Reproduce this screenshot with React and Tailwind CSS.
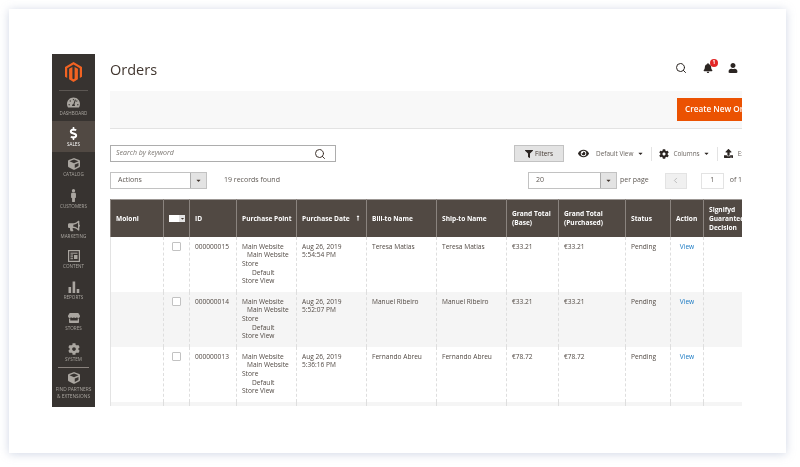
import React from 'react'
import { FaDollarSign, FaCube, FaMale, FaBullhorn, FaStore, FaCog, FaFilter, FaEye, FaUser, FaBell, FaTachometerAlt, FaCaretDown, FaUpload, FaLongArrowAltUp } from 'react-icons/fa'
import { LuSearch, LuChevronLeft } from 'react-icons/lu'

const ContentIcon = () => (
  <svg width="12" height="12" viewBox="0 0 12 12" fill="none" stroke="currentColor">
    <rect x="0.6" y="0.6" width="10.8" height="10.8" strokeWidth="1.2" />
    <path d="M2.5 3.2h7M2.5 5h2.5M2.5 6.8h2.5M2.5 8.7h2.5" strokeWidth="1" />
    <rect x="6" y="5" width="3.5" height="4" fill="currentColor" stroke="none" />
  </svg>
)

const ReportsIcon = () => (
  <svg width="12" height="12" viewBox="0 0 12 12" fill="currentColor">
    <rect x="0.5" y="6" width="2.6" height="6" />
    <rect x="4.6" y="0.5" width="2.6" height="11.5" />
    <rect x="8.7" y="8" width="2.6" height="4" />
  </svg>
)

const MagentoLogo = () => (
  <svg width="17" height="20" viewBox="0 0 17 20" fill="#f26322">
    <path d="M8.5 0 17 4.9v9.9l-2.2 1.3V6.2L8.5 2.6 2.2 6.2v9.9L0 14.8V4.9z" />
    <path d="M9.6 4.9 12.9 6.8v10.4L8.5 20 4.1 17.2V6.8l3.3-1.9v11.6l1.1.7 1.1-.7z" />
  </svg>
)

const NAV = [
  { label: 'DASHBOARD', icon: <FaTachometerAlt size={13} />, h: 'h-[30px]' },
  { label: 'SALES', icon: <FaDollarSign size={13} />, h: 'h-[31px]', active: true },
  { label: 'CATALOG', icon: <FaCube size={12} />, h: 'h-[31px]' },
  { label: 'CUSTOMERS', icon: <FaMale size={13} />, h: 'h-[31px]' },
  { label: 'MARKETING', icon: <FaBullhorn size={12} />, h: 'h-[30px]' },
  { label: 'CONTENT', icon: <ContentIcon />, h: 'h-[31px]' },
  { label: 'REPORTS', icon: <ReportsIcon />, h: 'h-[31px]' },
  { label: 'STORES', icon: <FaStore size={12} />, h: 'h-[31px]' },
  { label: 'SYSTEM', icon: <FaCog size={12} />, h: 'h-[30px]' },
]

const ROWS = [
  { id: '000000015', date: 'Aug 26, 2019', time: '5:54:54 PM', name: 'Teresa Matias', total: '€33.21', bg: 'bg-white' },
  { id: '000000014', date: 'Aug 26, 2019', time: '5:52:07 PM', name: 'Manuel Ribeiro', total: '€33.21', bg: 'bg-[#f5f5f5]' },
  { id: '000000013', date: 'Aug 26, 2019', time: '5:36:16 PM', name: 'Fernando Abreu', total: '€78.72', bg: 'bg-white' },
]

const th = 'border-x border-[#8a837e] px-[5px] text-left align-middle font-bold leading-[9px]'
const td = 'border-x border-dashed border-[#dedede] px-[5px] pt-[5px] align-top'

function Sidebar() {
  return (
    <aside className="flex h-full w-[43px] shrink-0 flex-col bg-[#373330] text-[#aaa6a0]">
      <div className="mx-[7px] flex h-[37px] shrink-0 items-start justify-center border-b border-[#5c5753] pt-[8px]">
        <MagentoLogo />
      </div>
      {NAV.map(item => (
        <div key={item.label} className={`flex shrink-0 flex-col items-center justify-center gap-[2px] ${item.h} ${item.active ? 'bg-[#514943] text-white' : ''}`}>
          {item.icon}
          <span className="text-[4.6px] leading-[5px]">{item.label}</span>
        </div>
      ))}
      <div className="mx-[6px] flex flex-col items-center border-t border-[#8a837e] pt-[4px] text-center">
        <FaCube size={12} />
        <span className="mt-[2px] whitespace-nowrap text-[4.8px] leading-[7px]">FIND PARTNERS<br />&amp; EXTENSIONS</span>
      </div>
    </aside>
  )
}

function Arrow() {
  return (
    <div className="flex h-full w-[16px] items-center justify-center border-l border-[#adadad] bg-[#e3e3e3] text-[#41362f]">
      <FaCaretDown size={7} />
    </div>
  )
}

function OrdersTable() {
  return (
    <table className="mt-[10px] w-[650px] table-fixed border-collapse border-l border-[#e3e3e3] text-[6.6px] leading-[8.7px] text-[#514943]">
      <colgroup>
        <col className="w-[53px]" /><col className="w-[26px]" /><col className="w-[47px]" /><col className="w-[60px]" /><col className="w-[70px]" />
        <col className="w-[70px]" /><col className="w-[70px]" /><col className="w-[52px]" /><col className="w-[67px]" /><col className="w-[45px]" />
        <col className="w-[33px]" /><col className="w-[57px]" />
      </colgroup>
      <thead>
        <tr className="h-[37px] border-t border-[#9c9794] bg-[#514943] text-white">
          <th className={th}>Moloni</th>
          <th className={th}>
            <div className="flex h-[7px] w-[16px] overflow-hidden">
              <div className="w-[10px] bg-white" />
              <div className="flex w-[6px] items-center justify-center bg-[#e3e3e3] text-[#41362f]"><FaCaretDown size={5} /></div>
            </div>
          </th>
          <th className={th}>ID</th>
          <th className={`${th} whitespace-nowrap`}>Purchase Point</th>
          <th className={th}>
            <div className="flex items-center justify-between whitespace-nowrap">Purchase Date <FaLongArrowAltUp size={6} /></div>
          </th>
          <th className={th}>Bill-to Name</th>
          <th className={th}>Ship-to Name</th>
          <th className={th}>Grand Total (Base)</th>
          <th className={th}>Grand Total (Purchased)</th>
          <th className={th}>Status</th>
          <th className={th}>Action</th>
          <th className={th}>Signifyd Guarantee Decision</th>
        </tr>
      </thead>
      <tbody>
        {ROWS.map(row => (
          <tr key={row.id} className={`h-[55px] ${row.bg}`}>
            <td className={td} />
            <td className={td}>
              <div className="ml-[3px] h-[9px] w-[9px] rounded-[1px] border border-[#c2c2c2] bg-white" />
            </td>
            <td className={`${td} pt-[6px]`}>{row.id}</td>
            <td className={`${td} pt-[6px]`}>
              <div>Main Website</div>
              <div className="pl-[5px]">Main Website</div>
              <div>Store</div>
              <div className="pl-[10px]">Default</div>
              <div>Store View</div>
            </td>
            <td className={`${td} pt-[6px]`}>{row.date}<br />{row.time}</td>
            <td className={`${td} pt-[6px]`}>{row.name}</td>
            <td className={`${td} pt-[6px]`}>{row.name}</td>
            <td className={`${td} pt-[6px]`}>{row.total}</td>
            <td className={`${td} pt-[6px]`}>{row.total}</td>
            <td className={`${td} pt-[6px]`}>Pending</td>
            <td className={`${td} pt-[6px] text-center text-[#1979c3]`}>View</td>
            <td className={td} />
          </tr>
        ))}
        <tr className="h-[4px] bg-[#f5f5f5]">
          {Array.from({ length: 12 }).map((_, i) => <td key={i} className="border-x border-dashed border-[#dedede]" />)}
        </tr>
      </tbody>
    </table>
  )
}

export default function App() {
  return (
    <div className="h-[467px] w-[800px] overflow-hidden bg-white pl-[9px] pt-[9px] font-['Open_Sans',sans-serif] blur-[0.35px]">
      <div className="h-[444px] w-[777px] bg-white pl-[43px] pt-[45px] shadow-[0_1px_9px_rgba(140,155,190,0.4)]">
        <div className="flex h-[353px] w-[690px]">
          <Sidebar />
          <main className="ml-[15px] h-full w-[632px] overflow-hidden">
            <div className="flex h-[37px] items-center justify-between pb-[5px] pr-[4px]">
              <h1 className="text-[14.5px] leading-none text-[#41362f]">Orders</h1>
              <div className="mb-[5px] flex items-center gap-[15px] text-[#2b2522]">
                <LuSearch size={12} className="mr-[1px]" />
                <div className="relative">
                  <FaBell size={10} />
                  <span className="absolute -right-[5px] -top-[4px] flex h-[8px] w-[8px] items-center justify-center rounded-full bg-[#e22626] text-[5px] font-bold leading-none text-white">1</span>
                </div>
                <FaUser size={10} />
              </div>
            </div>

            <div className="flex h-[38px] items-center justify-end border-b border-[#e3e3e3] bg-[#f8f8f8] pb-[1px]">
              <div className="flex h-[23px] w-[65px] shrink-0 items-center overflow-hidden whitespace-nowrap bg-[#eb5202] pl-[8px] text-[8.2px] font-semibold text-white">
                Create New Order
              </div>
            </div>

            <div className="mt-[16px] flex h-[17px] items-center text-[6.4px] text-[#6b6560]">
              <div className="flex h-full w-[226px] shrink-0 items-center justify-between border border-[#adadad] bg-white pl-[5px] pr-[9px] text-[7px] italic text-[#7a7570]">
                Search by keyword
                <LuSearch size={12} className="text-[#41362f]" />
              </div>
              <div className="ml-[178px] flex h-full w-[50px] shrink-0 items-center justify-center gap-[2px] border border-[#c2c2c2] bg-[#e3e3e3] text-[#41362f]">
                <FaFilter size={8} className="text-[#2b2522]" /> Filters
              </div>
              <FaEye size={11} className="ml-[14px] shrink-0 text-[#2b2522]" />
              <span className="ml-[7px] shrink-0 whitespace-nowrap">Default View</span>
              <FaCaretDown size={7} className="ml-[4px] shrink-0 text-[#2b2522]" />
              <div className="ml-[7px] h-[14px] w-px shrink-0 bg-[#e3e3e3]" />
              <FaCog size={10} className="ml-[7px] shrink-0 text-[#2b2522]" />
              <span className="ml-[4px] shrink-0">Columns</span>
              <FaCaretDown size={7} className="ml-[3px] shrink-0 text-[#2b2522]" />
              <div className="ml-[7px] h-[14px] w-px shrink-0 bg-[#e3e3e3]" />
              <FaUpload size={9} className="ml-[6px] shrink-0 text-[#2b2522]" />
              <span className="ml-[5px] shrink-0">Export</span>
            </div>

            <div className="mt-[10px] flex h-[17px] items-center text-[7px] text-[#5f5954]">
              <div className="flex h-full w-[97px] shrink-0 items-center justify-between border border-[#c2c2c2] bg-white pl-[7px]">
                Actions
                <Arrow />
              </div>
              <span className="ml-[17px] shrink-0 whitespace-nowrap">19 records found</span>
              <div className="ml-[248px] flex h-full w-[89px] shrink-0 items-center justify-between border border-[#c2c2c2] bg-white pl-[7px]">
                20
                <Arrow />
              </div>
              <span className="ml-[3px] shrink-0 whitespace-nowrap">per page</span>
              <div className="ml-[16px] flex h-[16px] w-[22px] shrink-0 items-center justify-center border border-[#e3e3e3] bg-[#f0f0f0] text-[#adadad]">
                <LuChevronLeft size={9} />
              </div>
              <div className="ml-[14px] flex h-[16px] w-[23px] shrink-0 items-center justify-center border border-[#e3e3e3] bg-white">1</div>
              <span className="ml-[6px] shrink-0 whitespace-nowrap">of 1</span>
            </div>

            <OrdersTable />
          </main>
        </div>
      </div>
    </div>
  )
}
